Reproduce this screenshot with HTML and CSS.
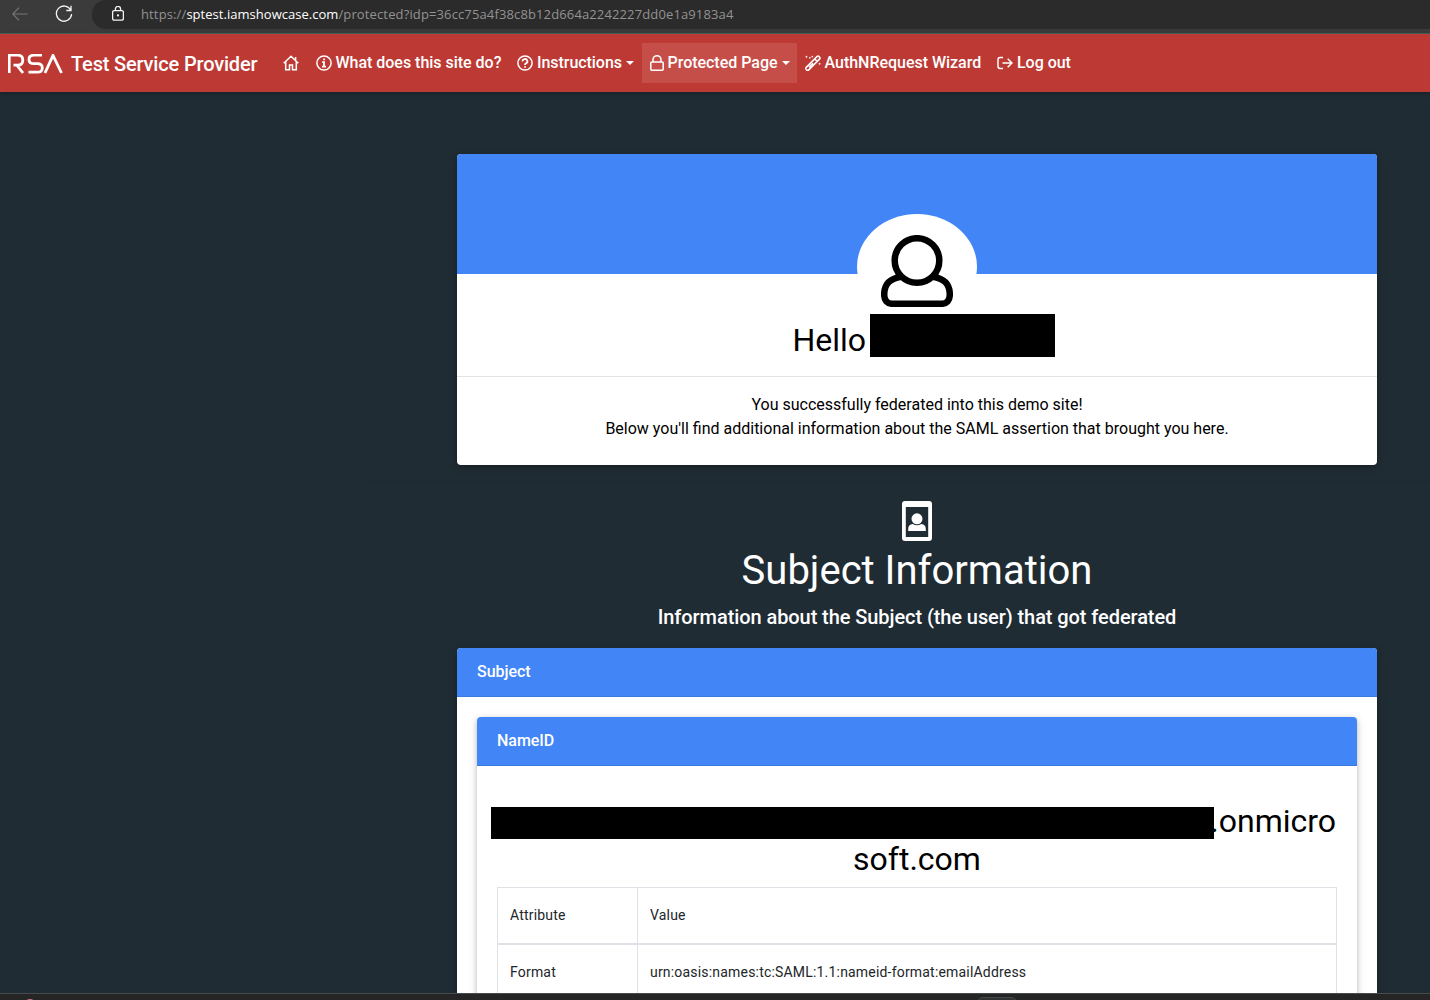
FILE: index.html
```html
<!DOCTYPE html>
<html lang="en">
<head>
<meta charset="utf-8">
<title>RSA Test Service Provider</title>
<link rel="stylesheet" href="styles.css">
</head>
<body>
<div class="window">
  <header class="browser-bar">
    <svg class="back" width="16" height="14" viewBox="0 0 16 14"><path d="M15.5 7H.8M7 .7.7 7 7 13.3"/></svg>
    <svg class="reload" width="18" height="18" viewBox="0 0 18 18"><path d="M15.8 5.2A7.6 7.6 0 1 0 16.6 9M16 .8v4.7h-4.7"/></svg>
    <div class="address">
      <svg class="padlock" width="12" height="15" viewBox="0 0 12 15"><rect x=".6" y="4.6" width="10.8" height="9.6" rx="1.6"/><path d="M3.4 4.5V3a2.6 2.6 0 0 1 5.2 0v1.5"/><circle cx="6" cy="9.4" r=".5"/></svg>
      <span class="url">https://<b>sptest.iamshowcase.com</b>/protected?idp=36cc75a4f38c8b12d664a2242227dd0e1a9183a4</span>
    </div>
  </header>

  <nav class="navbar">
    <a class="brand">
      <svg width="55" height="20" viewBox="0 0 55 20"><path d="M1.2 19V1.2h8.4q5.2 0 5.2 5t-5.2 5H5.5M9 11.5l6 7.5M34 1.2h-8q-5 0-5 4.2t5 4.3h3.3q5 0 5 4.2t-5 4.300h-8.800M37 19l8-17.600L53.500 19"/></svg>
      <span class="brand-name">Test Service Provider</span>
    </a>
    <a class="nav-item home"><svg class="icon" viewBox="0 0 16 16"><path d="M.7 8.3 8 1.2l7.3 7.1M2.7 6.7v8h3.8V10h3v4.7h3.8v-8M12.6 5V2"/></svg></a>
    <a class="nav-item about"><svg class="icon" viewBox="0 0 16 16"><circle cx="8" cy="8" r="7.1"/><path class="glyph" d="M6.2 7.2H8v4.300M6 11.600h4M7.200 4.400h1.800"/></svg><span>What does this site do?</span></a>
    <a class="nav-item help"><svg class="icon" viewBox="0 0 16 16"><circle cx="8" cy="8" r="7.1"/><path class="glyph" d="M5.6 6.4a2.4 2.2 0 1 1 3.5 1.8Q8 8.8 8 10M8 11.2v1.600"/></svg><span>Instructions</span><i class="caret"></i></a>
    <a class="nav-item active"><svg class="icon lock" viewBox="0 0 14 16"><rect x=".8" y="7" width="12.4" height="8.2" rx="1"/><path d="M3 7V4.700a4 4 0 0 1 8 0V7"/></svg><span>Protected Page</span><i class="caret"></i></a>
    <a class="nav-item wizard"><svg class="icon" viewBox="0 0 16 16"><path d="m1 12.600 11.200-11.200q.8-.8 1.600 0l.9.900q.8.800 0 1.600L3.500 15.100q-.8.800-1.600 0L1 14.200q-.8-.8 0-1.600ZM9.700 4l2.400 2.400M4 12.200l4-4"/><path class="spark" d="M1.500.8v2M.5 1.800h2M4.800 2v1.600M4 2.800h1.600M7.300.8v1.600M6.500 1.600h1.600M14.600 7.800v2M13.600 8.800h2"/></svg><span>AuthNRequest Wizard</span></a>
    <a class="nav-item logout"><svg class="icon" viewBox="0 0 16 16"><path d="M6 2.600H3.200Q1 2.600 1 4.800v6.400q0 2.200 2.200 2.200H6M5.500 8h9.300M10.700 3.700 15 8l-4.300 4.300"/></svg><span>Log out</span></a>
  </nav>

  <main class="page">
    <section class="card welcome">
      <div class="banner"></div>
      <div class="avatar"><svg width="72" height="72" viewBox="0 0 72 72"><path d="M20 41.800C10 43.500 3.200 48 3.200 59.500c0 6 3 9.300 8 9.300h49.600c5 0 8-3.300 8-9.300C68.800 48 62 43.500 52 41.800"/><circle cx="36" cy="25.500" r="22.300"/></svg></div>
      <h2 class="hello">Hello <span class="redacted-name"></span></h2>
      <p class="message">You successfully federated into this demo site!<br>Below you'll find additional information about the SAML assertion that brought you here.</p>
    </section>
    <hr class="divider">
    <section class="subject-heading">
      <svg width="30" height="40" viewBox="0 0 30 40"><path fill-rule="evenodd" d="M3 0h24q3 0 3 3v34q0 3-3 3H3q-3 0-3-3V3Q0 0 3 0Zm.8 6v30h22.400V6Z"/><circle cx="15" cy="17.800" r="5.500"/><path d="M6.200 30v-2q0-4.500 4.500-5 4.300 2.500 8.600 0 4.500.5 4.500 5v2Z"/></svg>
      <h1>Subject Information</h1>
      <p>Information about the Subject (the user) that got federated</p>
    </section>
    <section class="card subject">
      <div class="card-header">Subject</div>
      <div class="card name-id">
        <div class="card-header">NameID</div>
        <div class="identifier">
          <div class="id-line"><span class="suffix">.onmicro</span><span class="redacted-id"></span></div>
          <div class="id-rest">soft.com</div>
        </div>
        <table>
          <thead><tr><td class="key">Attribute</td><td>Value</td></tr></thead>
          <tbody><tr><td class="key">Format</td><td>urn:oasis:names:tc:SAML:1.1:nameid-format:emailAddress</td></tr></tbody>
        </table>
      </div>
    </section>
  </main>
  <footer class="taskbar"><span class="record"></span><span class="tab"></span></footer>
</div>
</body>
</html>
```

FILE: styles.css
```css
* { box-sizing: border-box; }
body { margin: 0; font-family: Roboto, sans-serif; color: #000; }
h1, h2, p { margin: 0; font-weight: 400; }
svg { display: block; flex: none; }
.window { width: 1430px; height: 1000px; display: flex; flex-direction: column; overflow: hidden; background: #202c34; }

.browser-bar { flex: 0 0 34px; display: flex; background: #3b3b3b; border-bottom: 1px solid #48615f; }
.browser-bar svg { fill: none; stroke: #f4f4f4; stroke-width: 1.3; }
.browser-bar .back { margin: 7px 0 0 12px; stroke: #777; stroke-width: 1.1; }
.browser-bar .reload { margin: 5px 0 0 27px; }
.address { flex: 1; height: 29px; margin-left: 19px; display: flex; background: #2b2b2b; border-radius: 14px 0 0 14px; }
.padlock { margin: 6px 0 0 20px; }
.url { margin-left: 17px; font: 13px/28px "Open Sans", sans-serif; letter-spacing: .13px; color: #929292; white-space: nowrap; }
.url b { font-weight: 400; color: #fff; letter-spacing: .03px; }

.navbar { flex: 0 0 58px; display: flex; align-items: flex-start; background: #bd3a34; color: #fff; box-shadow: 0 2px 5px rgba(0,0,0,.3); position: relative; }
.brand { display: flex; width: 275px; padding: 20px 0 0 8px; }
.brand svg { fill: none; stroke: #fff; stroke-width: 2.8; }
.brand-name { margin-left: 8px; font-size: 20px; line-height: 20px; font-weight: 500; letter-spacing: -.17px; white-space: nowrap; }
.nav-item { height: 40px; margin-top: 9px; padding: 0 8px; display: flex; align-items: center; font-size: 16px; font-weight: 500; white-space: nowrap; color: #fff; }
.nav-item span { margin-left: 3.5px; line-height: 40px; letter-spacing: -.02px; }
.icon { width: 16px; height: 16px; fill: none; stroke: #fff; stroke-width: 1.5; }
.icon.lock { width: 14px; }
.icon .spark { stroke-width: .8; }
.icon .glyph { stroke-width: 1.8; }
.home { width: 33px; }
.home .icon { margin-left: -.5px; }
.about { width: 201px; }
.help { width: 133px; }
.help span { margin-left: 4px; letter-spacing: -.05px; }
.active { width: 155px; background: #c64e49; }
.wizard { width: 191px; }
.logout { padding-left: 9px; }
.logout span { margin-left: 4px; }
.caret { margin-left: 4px; border: 4px solid transparent; border-top-color: #fff; border-bottom: 0; }

.page { flex: 1; min-height: 0; overflow: hidden; padding: 62px 0 0 364px; }
.card { background: #fff; border-radius: 4px; box-shadow: 0 2px 5px rgba(0,0,0,.18), 0 2px 10px rgba(0,0,0,.14); }
.welcome { width: 920px; height: 311px; margin-left: 93px; overflow: hidden; }
.banner { height: 120px; background: #4285f6; }
.avatar { width: 120px; height: 105px; margin: -60px auto 0; padding-top: 21px; border-radius: 50%; background: #fff; }
.avatar svg { margin: 0 auto; fill: #fff; stroke: #000; stroke-width: 6.5; }
.hello { height: 58px; padding-left: 13px; display: flex; justify-content: center; border-bottom: 1px solid #e2e3e4; font-size: 32px; line-height: 42px; }
.redacted-name { width: 185px; height: 43px; margin: -5px 0 0 3.5px; background: #000; }
.message { padding-top: 16px; text-align: center; font-size: 16px; line-height: 24px; }
.divider { height: 1px; margin: 16px 0 0; border: 0; background: #1d282f; }
.subject-heading { width: 920px; margin: 19px 0 0 93px; color: #fff; text-align: center; }
.subject-heading svg { margin: 0 auto; fill: #fff; }
.subject-heading h1 { margin-top: 6px; font-size: 40px; line-height: 48px; }
.subject-heading p { margin-top: 7px; font-size: 20px; line-height: 30px; font-weight: 500; letter-spacing: -.08px; }
.subject { width: 920px; height: 500px; margin: 16px 0 0 93px; padding-bottom: 20px; }
.card-header { height: 49px; padding: 0 20px; border-radius: 4px 4px 0 0; border-bottom: 1px solid #3b78dd; background: #4285f6; color: #fff; font-size: 16px; line-height: 47px; font-weight: 500; letter-spacing: -.05px; }
.name-id { height: 480px; margin: 20px 20px 0; }
.identifier { height: 121px; padding: 36px 21px 0 14px; font-size: 32px; line-height: 38px; }
.id-line { display: flex; flex-direction: row-reverse; }
.redacted-id { width: 723px; height: 32px; margin-top: 5px; background: #000; }
.id-rest { margin-left: 7px; text-align: center; }
.suffix { flex: 1; margin-left: -4px; white-space: nowrap; text-align: right; }
table { width: 840px; margin: 0 20px; border-collapse: collapse; font-size: 14px; color: #212529; }
td { height: 57px; padding: 0 12px; border: 1px solid #dee2e6; letter-spacing: .19px; }
thead td { height: 56px; border-bottom-width: 2px; }
.key { width: 140px; }

.taskbar { flex: 0 0 7px; display: flex; overflow: hidden; border-top: 1px solid #484b4b; background: #252525; position: relative; }
.record { width: 10px; height: 8px; margin: 5px 0 0 25px; border-radius: 50%; background: #d47886; }
.tab { width: 40px; height: 12px; margin: 3px 0 0 942px; border: 1px solid #444848; border-radius: 7px; background: #303333; }
```
